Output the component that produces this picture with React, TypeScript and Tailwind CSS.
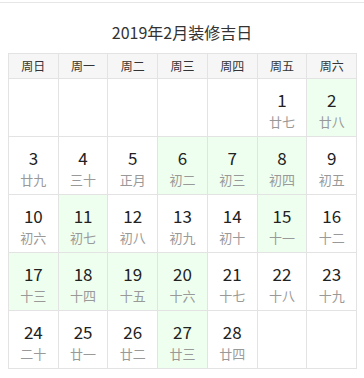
const days: { d: number; lunar: string; good?: boolean }[] = [
  { d: 1, lunar: '廿七' },
  { d: 2, lunar: '廿八', good: true },
  { d: 3, lunar: '廿九' },
  { d: 4, lunar: '三十' },
  { d: 5, lunar: '正月' },
  { d: 6, lunar: '初二', good: true },
  { d: 7, lunar: '初三', good: true },
  { d: 8, lunar: '初四', good: true },
  { d: 9, lunar: '初五' },
  { d: 10, lunar: '初六' },
  { d: 11, lunar: '初七', good: true },
  { d: 12, lunar: '初八' },
  { d: 13, lunar: '初九' },
  { d: 14, lunar: '初十' },
  { d: 15, lunar: '十一', good: true },
  { d: 16, lunar: '十二' },
  { d: 17, lunar: '十三', good: true },
  { d: 18, lunar: '十四', good: true },
  { d: 19, lunar: '十五', good: true },
  { d: 20, lunar: '十六', good: true },
  { d: 21, lunar: '十七' },
  { d: 22, lunar: '十八' },
  { d: 23, lunar: '十九' },
  { d: 24, lunar: '二十' },
  { d: 25, lunar: '廿一' },
  { d: 26, lunar: '廿二' },
  { d: 27, lunar: '廿三', good: true },
  { d: 28, lunar: '廿四' },
];

const weekdays = ['周日', '周一', '周二', '周三', '周四', '周五', '周六'];

export default function App() {
  // Feb 1 2019 is a Friday -> 5 leading blanks, pad to full weeks
  const cells: (typeof days[number] | null)[] = [...Array(5).fill(null), ...days];
  while (cells.length % 7) cells.push(null);

  return (
    <div className="w-[364px] h-[378px] bg-white pt-0.5 font-['Noto_Sans_CJK_SC',sans-serif]">
      <div className="border-t border-[#e6e6e6]">
        <div className="h-[50px] pt-[17px] text-center text-[16px] leading-6 text-[#333]">
          2019年2月装修吉日
        </div>
        <div className="ml-2 w-[349px] grid grid-cols-7 border-l border-t border-[#e3e3e3]">
          {weekdays.map((w) => (
            <div
              key={w}
              className="h-[25px] flex items-center justify-center bg-[#f6f6f6] border-r border-b border-[#e3e3e3] text-[12px] text-[#333]"
            >
              {w}
            </div>
          ))}
          {cells.map((c, i) => (
            <div
              key={i}
              className={`h-[58px] border-r border-b border-[#e3e3e3] flex flex-col items-center ${
                c?.good ? 'bg-[#efffef]' : 'bg-white'
              }`}
            >
              {c && (
                <>
                  <span className="mt-[9px] text-[17px] leading-6 text-[#222]">{c.d}</span>
                  <span className="text-[13px] leading-[20px] text-[#999]">{c.lunar}</span>
                </>
              )}
            </div>
          ))}
        </div>
      </div>
    </div>
  );
}
